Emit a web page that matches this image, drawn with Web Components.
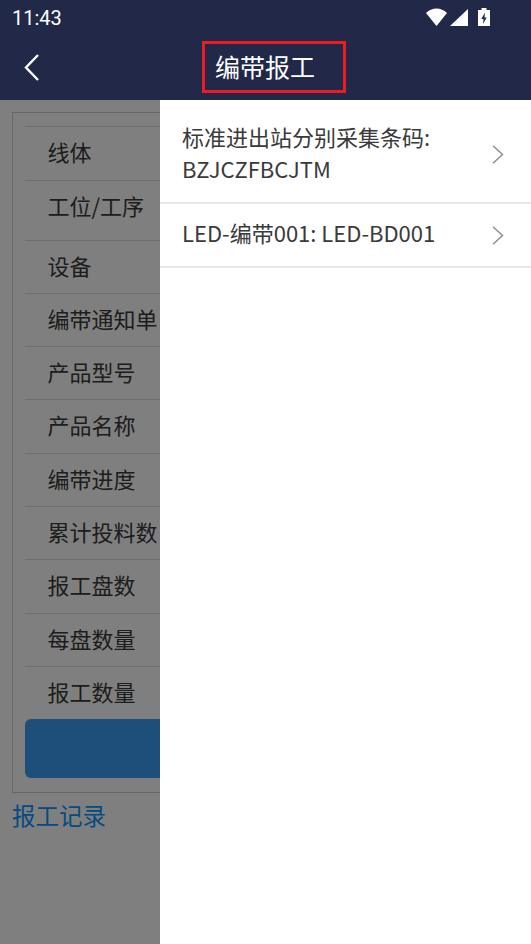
<!DOCTYPE html>
<html lang="zh">
<head>
<meta charset="utf-8">
<style>
  html, body { margin: 0; height: 100%; }
  body { font-family: "Noto Sans CJK SC", sans-serif; overflow: hidden; }
</style>
</head>
<body>
<report-app>
  <report-form slot="form">
    <form-row style="--h:54px">线体</form-row>
    <form-row style="--h:60px">工位/工序</form-row>
    <form-row>设备</form-row>
    <form-row>编带通知单</form-row>
    <form-row>产品型号</form-row>
    <form-row>产品名称</form-row>
    <form-row>编带进度</form-row>
    <form-row>累计投料数</form-row>
    <form-row>报工盘数</form-row>
    <form-row>每盘数量</form-row>
    <form-row>报工数量</form-row>
  </report-form>
  <picker-item slot="drawer" style="--h:104px;--pad:7px 27px 0 22px">标准进出站分别采集条码:<br>BZJCZFBCJTM</picker-item>
  <picker-item slot="drawer" style="--h:64px;--pad:0 27px 0 22px">LED-编带001: LED-BD001</picker-item>
</report-app>

<script>
class ReportApp extends HTMLElement {
  connectedCallback() {
    const root = this.attachShadow({mode: 'open'})
    root.innerHTML = `
    <style>
      :host { display: flex; flex-direction: column; position: relative; width: 531px; height: 944px; overflow: hidden; background: #fff; }
      .head { height: 100px; background: #222948; color: #fff; flex: none; position: relative; z-index: 3; }
      .status { height: 34px; display: flex; align-items: center; justify-content: space-between; padding: 2px 41px 0 12px; box-sizing: border-box; font: 20px Roboto, sans-serif; }
      .status svg { display: block; margin-top: -2px; }
      .bar { height: 66px; display: flex; align-items: center; }
      .back { width: 64px; padding: 2px 0 0 22px; box-sizing: border-box; display: flex; }
      .title { margin-left: 138px; width: 144px; height: 52px; box-sizing: border-box; border: 3px solid #ed1c24; margin-top: -1px; padding-left: 10px; font-size: 25px; line-height: 44px; white-space: nowrap; }
      .body { flex: 1; padding: 12px; box-sizing: border-box; }
      .link { color: #0a96ff; font-size: 23.5px; line-height: 32px; margin-top: 6px; }
      .shade { position: absolute; inset: 100px 0 0 0; background: rgba(0,0,0,.5); z-index: 1; }
      .drawer { position: absolute; top: 100px; bottom: 0; left: 160px; right: 0; background: #fff; z-index: 2; display: flex; flex-direction: column; }
    </style>
    <div class="head">
      <div class="status">
        <span>11:43</span>
        <svg width="64" height="20" viewBox="0 0 64 20">
          <path d="M0 6 C6 0 15 0 21 6 L10.500 19 Z" fill="#fff"/>
          <path d="M24 19 L42 2 V19 Z" fill="#fff"/>
          <path d="M52 3 h3.500 v-2 h5 v2 h3.500 v16 h-12 z" fill="#fff"/>
          <path d="M59 5.500 L55.300 12 H57.500 L57 17 L60.700 10.500 H58.500 Z" fill="#222948"/>
        </svg>
      </div>
      <div class="bar">
        <div class="back">
          <svg width="24" height="30" viewBox="0 0 24 30"><path d="M16 2 L4 14.500 L16 27" fill="none" stroke="#fff" stroke-width="2.400"/></svg>
        </div>
        <div class="title">编带报工</div>
      </div>
    </div>
    <div class="body">
      <slot name="form"></slot>
      <div class="link">报工记录</div>
    </div>
    <div class="shade"></div>
    <div class="drawer"><slot name="drawer"></slot></div>
    `
  }
}

class ReportForm extends HTMLElement {
  connectedCallback() {
    const root = this.attachShadow({mode: 'open'})
    root.innerHTML = `
    <style>
      :host { display: block; height: 681px; box-sizing: border-box; border: 1.5px solid #cfcfcf; padding: 12.5px 11px 0 11.5px; }
      .btn { height: 59px; background: #3d9df5; border-radius: 6px; }
    </style>
    <slot></slot>
    <div class="btn"></div>
    `
  }
}

class FormRow extends HTMLElement {
  connectedCallback() {
    const root = this.attachShadow({mode: 'open'})
    root.innerHTML = `
    <style>
      :host { display: block; height: var(--h, 53.300px); box-sizing: border-box; border-top: 1px solid #ddd; padding-left: 23px; color: #3a3a3a; font-size: 22px; line-height: 49px; white-space: nowrap; }
    </style>
    <slot></slot>
    `
  }
}

class PickerItem extends HTMLElement {
  connectedCallback() {
    const root = this.attachShadow({mode: 'open'})
    root.innerHTML = `
    <style>
      :host { display: flex; align-items: center; justify-content: space-between; height: var(--h); box-sizing: border-box; border-bottom: 2px solid #e8e8e8; padding: var(--pad); color: #3a3a3a; font-size: 22px; line-height: 32px; }
      .text { padding-bottom: 6px; }
      svg { flex: none; }
    </style>
    <div class="text"><slot></slot></div>
    <svg width="12" height="19" viewBox="0 0 12 19"><path d="M1 0.700 L10.500 9.500 L1 18.300" fill="none" stroke="#8d8d99" stroke-width="1.500"/></svg>
    `
  }
}

window.customElements.define('report-app', ReportApp)
window.customElements.define('report-form', ReportForm)
window.customElements.define('form-row', FormRow)
window.customElements.define('picker-item', PickerItem)
</script>
</body>
</html>
